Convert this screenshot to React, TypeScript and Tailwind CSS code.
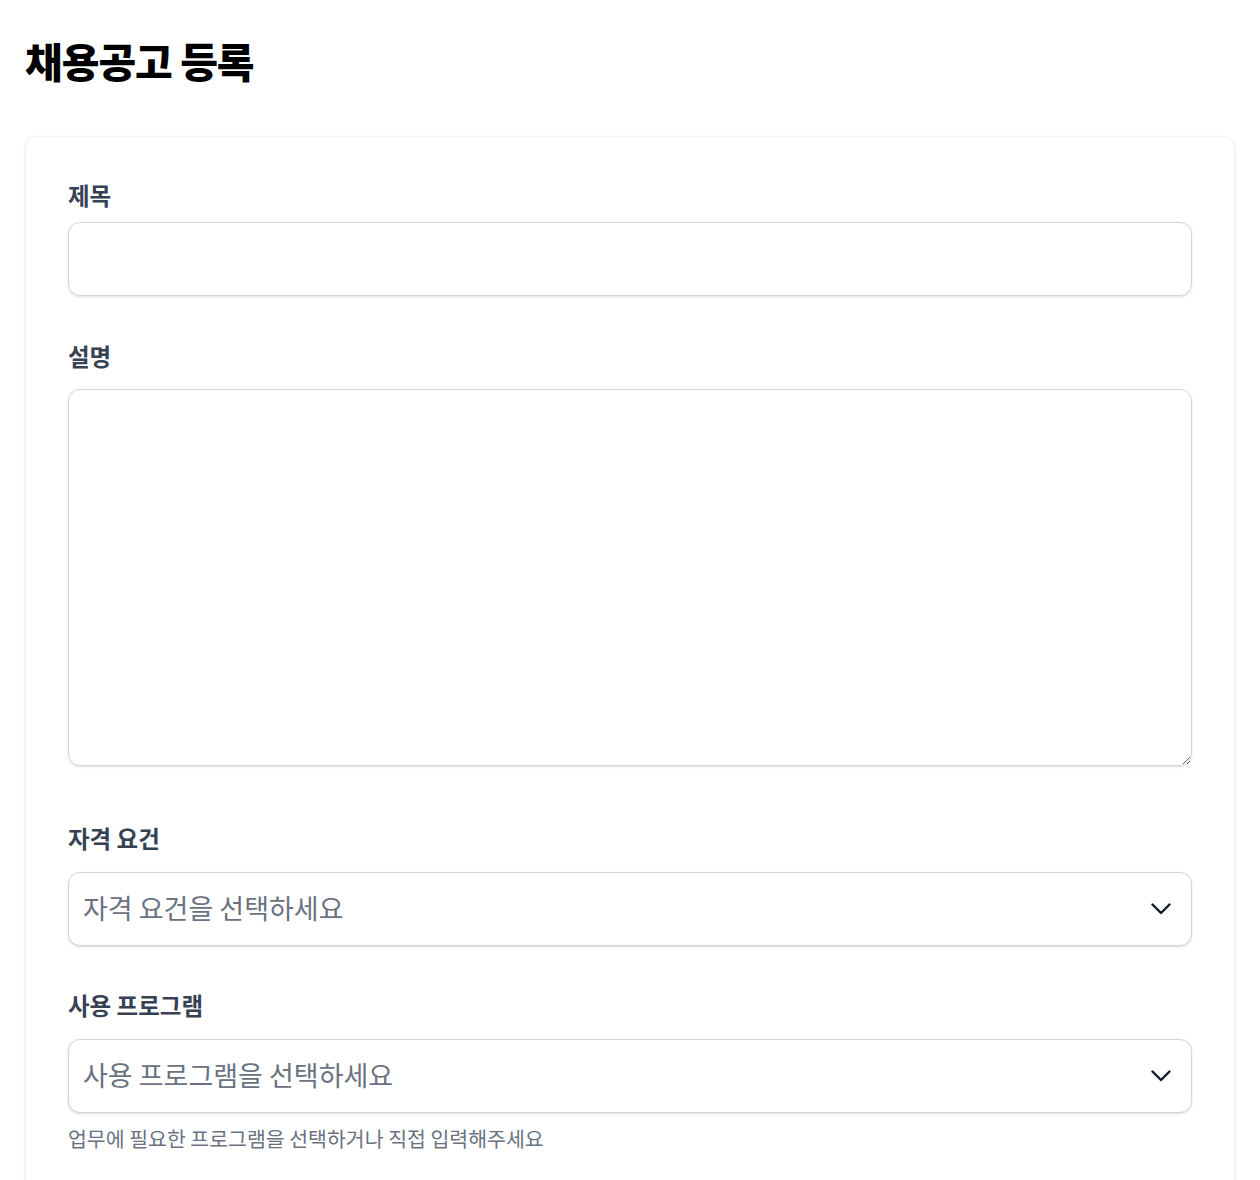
import React from 'react';

const ChevronDown: React.FC = () => (
  <svg width="20" height="12" viewBox="0 0 20 12" fill="none" className="shrink-0">
    <path d="M1.5 1.5L10 10L18.5 1.5" stroke="#111827" strokeWidth="2.4" strokeLinecap="round" strokeLinejoin="round" />
  </svg>
);

interface SelectFieldProps {
  placeholder: string;
}

const SelectField: React.FC<SelectFieldProps> = ({ placeholder }) => (
  <button
    type="button"
    className="flex h-[74px] w-full items-center justify-between rounded-xl border border-gray-300 bg-white pl-[14px] pr-[20px] shadow-sm"
  >
    <span className="mb-[4px] text-[27px] leading-none text-gray-500">{placeholder}</span>
    <ChevronDown />
  </button>
);

const labelClass = 'block text-[23.5px] font-semibold leading-[33px] text-gray-700';

const App: React.FC = () => {
  return (
    <div className="min-h-screen bg-white px-[25px] pt-[35px] font-['Noto_Sans_CJK_KR',sans-serif]">
      <h1 className="mb-[51px] text-[41px] font-extrabold leading-[50px] tracking-tight text-black">채용공고 등록</h1>

      <div className="rounded-xl border border-gray-100 bg-white px-[42px] pt-[42px] pb-[60px] shadow-sm">
        <div>
          <label className={`${labelClass} mb-[10px]`}>제목</label>
          <input type="text" className="h-[74px] w-full rounded-xl border border-gray-300 px-[14px] text-[27px] shadow-sm outline-none" />
        </div>

        <div className="mt-[44px]">
          <label className={`${labelClass} mb-[16px]`}>설명</label>
          <textarea className="block h-[377px] w-full rounded-xl border border-gray-300 px-[14px] py-[12px] text-[27px] shadow-sm outline-none" />
        </div>

        <div className="mt-[56px]">
          <label className={`${labelClass} mb-[17px]`}>자격 요건</label>
          <SelectField placeholder="자격 요건을 선택하세요" />
        </div>

        <div className="mt-[43px]">
          <label className={`${labelClass} mb-[17px]`}>사용 프로그램</label>
          <SelectField placeholder="사용 프로그램을 선택하세요" />
          <p className="mt-[11px] text-[20.5px] leading-[29px] text-gray-500">업무에 필요한 프로그램을 선택하거나 직접 입력해주세요</p>
        </div>
      </div>
    </div>
  );
};

export default App;
